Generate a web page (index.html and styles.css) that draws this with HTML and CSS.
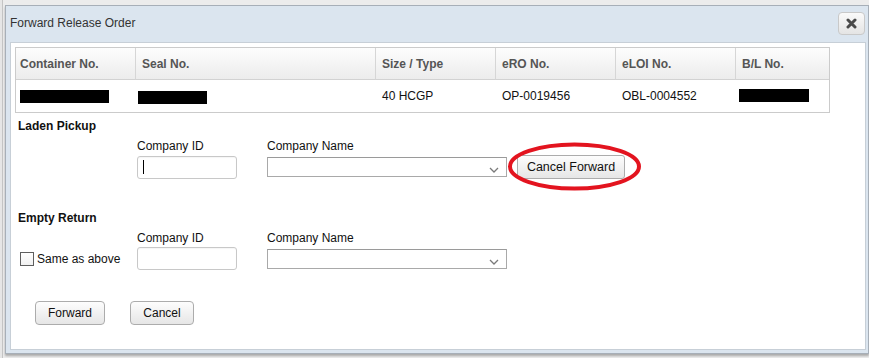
FILE: index.html
```html
<!DOCTYPE html>
<html>
<head>
<meta charset="utf-8">
<title>Forward Release Order</title>
<link rel="stylesheet" href="styles.css">
</head>
<body>
<div class="page">
  <div class="dialog">
    <div class="titlebar">
      <span class="title">Forward Release Order</span>
      <button class="close" aria-label="Close">
        <svg width="11" height="11" viewBox="0 0 11 11"><path d="M2 2 L9 9 M9 2 L2 9" stroke="#4a4a4a" stroke-width="3" stroke-linecap="round"/></svg>
      </button>
    </div>
    <div class="content">
      <div class="grid-table">
        <div class="th">Container No.</div>
        <div class="th">Seal No.</div>
        <div class="th">Size / Type</div>
        <div class="th">eRO No.</div>
        <div class="th">eLOI No.</div>
        <div class="th last">B/L No.</div>
        <div class="td"><span class="redact r1"></span></div>
        <div class="td"><span class="redact r2"></span></div>
        <div class="td">40 HCGP</div>
        <div class="td">OP-0019456</div>
        <div class="td">OBL-0004552</div>
        <div class="td"><span class="redact r3"></span></div>
      </div>

      <div class="section-title first">Laden Pickup</div>
      <div class="form-row row1">
        <span class="lbl c-id">Company ID</span>
        <span class="lbl c-name">Company Name</span>
        <div class="textbox c-id ctl"><span class="caret"></span></div>
        <div class="select c-name ctl">
          <svg width="10" height="6" viewBox="0 0 10 6"><path d="M1 1 L5 5 L9 1" fill="none" stroke="#7a7a7a" stroke-width="1.3"/></svg>
        </div>
        <div class="btn-wrap c-btn ctl">
          <button class="btn btn-cf">Cancel Forward</button>
          <svg class="ring" width="136" height="51" viewBox="0 0 136 51"><ellipse cx="67.5" cy="24.5" rx="64.5" ry="22" fill="none" stroke="#e3141f" stroke-width="4"/></svg>
        </div>
      </div>

      <div class="section-title second">Empty Return</div>
      <div class="form-row row2">
        <span class="lbl c-id">Company ID</span>
        <span class="lbl c-name">Company Name</span>
        <label class="check c-chk ctl"><span class="box"></span>Same as above</label>
        <div class="textbox c-id ctl"></div>
        <div class="select c-name ctl">
          <svg width="10" height="6" viewBox="0 0 10 6"><path d="M1 1 L5 5 L9 1" fill="none" stroke="#7a7a7a" stroke-width="1.3"/></svg>
        </div>
      </div>

      <div class="footer">
        <button class="btn btn-fwd">Forward</button>
        <button class="btn btn-cancel">Cancel</button>
      </div>
    </div>
  </div>
</div>
</body>
</html>
```

FILE: styles.css
```css
html, body {
  margin: 0;
  padding: 0;
}
body {
  width: 869px;
  height: 358px;
  overflow: hidden;
  background: #e3e3e3;
  font-family: "Liberation Sans", Arial, sans-serif;
  font-size: 12px;
  color: #222;
}
.page {
  position: relative;
  width: 869px;
  height: 358px;
  background: linear-gradient(to right, #e6e6e6 0, #e6e6e6 2px, #c4c4c4 2px, #c4c4c4 3px, #ececec 3px);
}
.dialog {
  position: absolute;
  left: 5px;
  top: 5px;
  width: 864px;
  height: 349px;
  box-sizing: border-box;
  background: #dbe5ef;
  border: 1px solid #a7afb8;
  box-shadow: 0 2px 2px rgba(0,0,0,0.28);
  display: flex;
  flex-direction: column;
}
.titlebar {
  height: 36px;
  display: flex;
  align-items: center;
  justify-content: space-between;
  padding: 0 3px 0 4px;
  flex: none;
}
.title {
  color: #333;
  font-size: 12px;
  margin-top: -2px;
}
.close {
  width: 27px;
  height: 23px;
  margin-top: -2px;
  padding: 0;
  box-sizing: border-box;
  border: 1px solid #c9c9c9;
  border-radius: 4px;
  background: linear-gradient(#fafafa, #e4e4e4);
  display: flex;
  align-items: center;
  justify-content: center;
}
.content {
  margin: 0 2px 3px 4px;
  flex: 1;
  background: #fff;
  border: 1px solid #c7cfd7;
  padding: 4px;
}
.grid-table {
  display: grid;
  grid-template-columns: 120px 240px 120px 120px 120px 1fr;
  width: 815px;
  box-sizing: border-box;
  border: 1px solid #cbcbcb;
}
.th {
  height: 31px;
  border-bottom: 1px solid #d2d2d2;
  border-right: 1px solid #d6d6d6;
  background: linear-gradient(#fdfdfd, #ececec);
  font-weight: bold;
  color: #555;
  display: flex;
  align-items: center;
  padding-left: 6px;
}
.th:first-child { padding-left: 4px; }
.th.last { border-right: none; }
.td {
  height: 32px;
  display: flex;
  align-items: center;
  padding-left: 6px;
  color: #111;
}
.td:nth-child(7) { padding-left: 4px; }
.redact {
  display: block;
  background: #000;
  height: 13px;
}
.r1 { width: 89px; }
.r2 { width: 69px; margin-left: -4px; margin-top: 2px; }
.r3 { width: 70px; margin-left: -3px; margin-top: -2px; }

.section-title {
  font-weight: bold;
  color: #111;
  line-height: 14px;
  padding-left: 3px;
}
.section-title.first { margin-top: 6px; }
.section-title.second { margin-top: 32px; }

.form-row {
  display: grid;
  grid-template-columns: 122px 100px 30px 240px 10px max-content;
  grid-template-rows: 14px 24px;
  align-items: center;
}
.row1 { margin-top: 6px; row-gap: 2px; }
.row2 { margin-top: 6px; row-gap: 2px; grid-template-rows: 14px 23px; }
.lbl {
  grid-row: 1;
  line-height: 14px;
  color: #111;
}
.ctl { grid-row: 2; }
.c-chk { grid-column: 1; }
.c-id { grid-column: 2; }
.c-name { grid-column: 4; }
.c-btn { grid-column: 6; }

.textbox {
  width: 100px;
  height: 23px;
  box-sizing: border-box;
  border: 1px solid #c8c8c8;
  border-radius: 3px;
  background: #fff;
  box-shadow: inset 0 1px 1px rgba(0,0,0,0.04);
  display: flex;
  align-items: center;
  padding-left: 5px;
}
.caret {
  display: block;
  width: 1px;
  height: 14px;
  background: #000;
}
.select {
  width: 240px;
  height: 20px;
  box-sizing: border-box;
  border: 1px solid #a9a9a9;
  border-top-color: #9a9a9a;
  background: #fff;
  display: flex;
  justify-content: flex-end;
  align-items: flex-end;
  padding: 0 7px 3px 0;
}
.btn-wrap {
  position: relative;
  width: 108px;
  height: 24px;
}
.btn {
  font-family: "Liberation Sans", Arial, sans-serif;
  font-size: 12px;
  color: #111;
  height: 24px;
  box-sizing: border-box;
  border: 1px solid #acacac;
  border-radius: 4px;
  background: linear-gradient(#fdfdfd, #e6e6e6);
  padding: 0;
}
.btn-cf {
  width: 108px;
  border-radius: 3px;
  font-size: 12.5px;
}
.ring {
  position: absolute;
  left: -10px;
  top: -13px;
  pointer-events: none;
}
.check {
  display: flex;
  align-items: center;
  padding-left: 5px;
  color: #111;
}
.box {
  width: 14px;
  height: 14px;
  box-sizing: border-box;
  border: 1px solid #5e5e5e;
  background: linear-gradient(#fff, #f1f1f1);
  margin-right: 3px;
}
.footer {
  display: flex;
  gap: 25px;
  margin-top: 31px;
  padding-left: 20px;
}
.btn-fwd { width: 70px; }
.btn-cancel { width: 64px; }
```
